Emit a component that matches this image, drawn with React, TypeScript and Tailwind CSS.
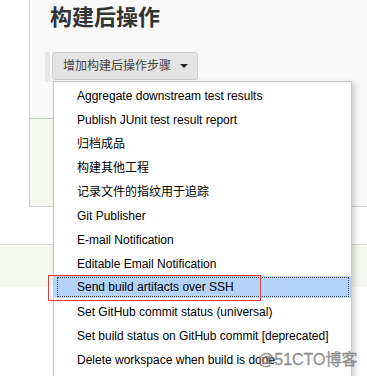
import React from "react";

const items = [
	"Aggregate downstream test results",
	"Publish JUnit test result report",
	"归档成品",
	"构建其他工程",
	"记录文件的指纹用于追踪",
	"Git Publisher",
	"E-mail Notification",
	"Editable Email Notification",
	"Send build artifacts over SSH",
	"Set GitHub commit status (universal)",
	"Set build status on GitHub commit [deprecated]",
	"Delete workspace when build is done",
];

const selected = 8;

const App = () => {
	return (
		<div
			className="relative w-[367px] h-[376px] overflow-hidden bg-white"
			style={{ fontFamily: '"Liberation Sans", "Noto Sans CJK SC", sans-serif' }}
		>
			{/* ---------- Page behind the menu ---------- */}
			<div className="flex h-[207px]">
				<div className="w-[29px] bg-white" />
				<div className="flex-1 flex flex-col bg-[#f9f9f9] border-l border-b border-[#d2d2d2]">
					<h2 className="pl-[20px] pt-[4px] text-[22px] leading-[28px] font-bold text-[#333]">
						构建后操作
					</h2>
					<div className="flex items-start gap-[2px] pl-[15px] mt-[20px]">
						<div className="w-[5px] h-[30px] bg-[#e8e8e8]" />
						<button className="flex items-center h-[28px] pl-[10px] pr-[9px] gap-[9px] rounded-[3px] border border-[#cfcfcf] bg-[#e4e4e4] text-[12px] text-[#444]">
							增加构建后操作步骤
							<span className="w-0 h-0 border-l-[4px] border-r-[4px] border-t-[4px] border-l-transparent border-r-transparent border-t-[#222]" />
						</button>
					</div>
					<div className="-ml-px mt-[36px] flex-1 w-[311px] border border-b-0 border-[#b6d3c2] bg-[#f5f7f1]" />
				</div>
			</div>
			<div className="h-[37px] bg-white" />
			<div className="h-[43px] border-t border-[#d6d6d6] bg-[#f5f7f1]" />

			{/* ---------- Dropdown menu ---------- */}
			<div className="absolute left-[53px] top-[81px] w-[299px] h-[320px] pt-[2px] bg-white border border-[#c8c8c8] shadow-[3px_2px_6px_rgba(0,0,0,0.18)]">
				{items.map((item, i) =>
					i === selected ? (
						<div key={item} className="h-[24px]">
							<div className="h-[22px] bg-[#b3d3fb] pl-[3px] pr-[2px] pt-[1px]">
								<div className="h-[20px] border border-dotted border-[#444] pl-[19px] flex items-center text-[12px] text-black whitespace-nowrap">
									{item}
								</div>
							</div>
						</div>
					) : (
						<div
							key={item}
							className="h-[24px] pl-[23px] flex items-center text-[12px] text-black whitespace-nowrap"
						>
							{item}
						</div>
					)
				)}
			</div>

			{/* ---------- Annotation ---------- */}
			<div className="absolute left-[48px] top-[275px] w-[213px] h-[26px] border border-[#e5373c]" />

			<div
				className="absolute left-[258px] top-[349px] text-[16px] leading-[22px] text-[#8d8d8d] opacity-90 whitespace-nowrap"
				style={{ WebkitTextStroke: "0.3px #777" }}
			>
				@51CTO博客
			</div>
		</div>
	);
};

export default App;
